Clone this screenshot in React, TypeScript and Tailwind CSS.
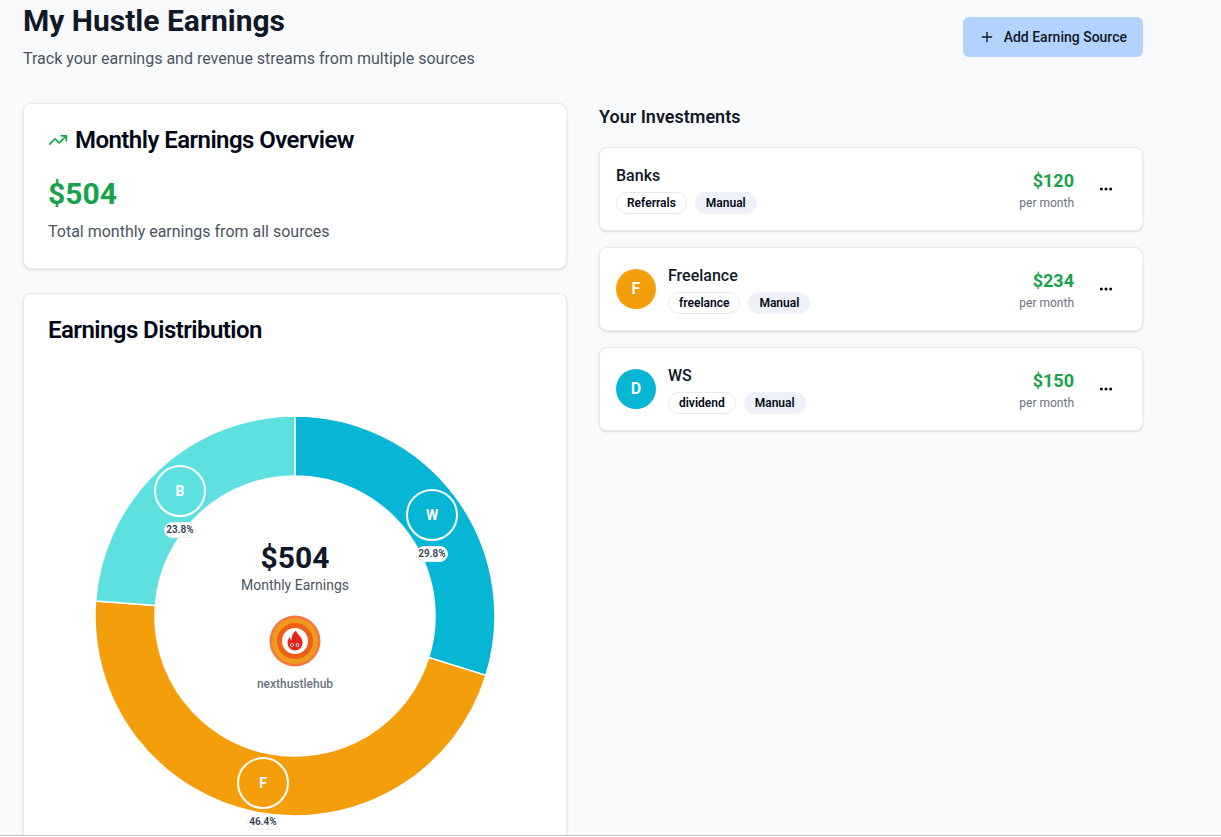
import { Plus, TrendingUp, MoreHorizontal } from "lucide-react";

const font = "font-['Roboto',sans-serif]";

const sources = [
  { name: "Banks", tag: "Referrals", amount: "$120" },
  { name: "Freelance", tag: "freelance", amount: "$234", letter: "F", color: "bg-[#f59e0b]" },
  { name: "WS", tag: "dividend", amount: "$150", letter: "D", color: "bg-[#06b6d4]" },
];

const markers = [
  { letter: "B", pct: "23.8%", pos: "left-[59px] top-[49px]" },
  { letter: "W", pct: "29.8%", pos: "left-[311px] top-[73px]" },
  { letter: "F", pct: "46.4%", pos: "left-[142px] top-[341px]" },
];

function polar(r: number, frac: number) {
  const a = frac * Math.PI * 2 - Math.PI / 2;
  return [200 + r * Math.cos(a), 200 + r * Math.sin(a)];
}

function slice(from: number, to: number) {
  const [x1, y1] = polar(200, from);
  const [x2, y2] = polar(200, to);
  const [x3, y3] = polar(140, to);
  const [x4, y4] = polar(140, from);
  const large = to - from > 0.5 ? 1 : 0;
  return `M${x1} ${y1}A200 200 0 ${large} 1 ${x2} ${y2}L${x3} ${y3}A140 140 0 ${large} 0 ${x4} ${y4}Z`;
}

function Logo() {
  return (
    <svg width="52" height="52" viewBox="0 0 52 52" aria-hidden="true">
      <circle cx="26" cy="26" r="25.5" fill="#f4793f" />
      <circle cx="26" cy="26" r="23" fill="#ee9a1c" />
      <circle cx="26" cy="26" r="18" fill="#ef5f1c" />
      <circle cx="26" cy="26" r="13" fill="#ffffff" />
      <path d="M27 15.500c.5 3.500 6.500 6 6.500 12.500a7.500 7.500 0 0 1-15 0c0-2.500 1-4.500 2.300-6 .2 1.500.7 2.500 1.700 3 .2-4 1.500-7.500 4.500-9.500z" fill="#e5231b" />
      <circle cx="23" cy="30" r="1.800" fill="#fff" />
      <circle cx="28.500" cy="30" r="1.800" fill="#fff" />
      <circle cx="23" cy="30" r="1" fill="#333" />
      <circle cx="28.500" cy="30" r="1" fill="#333" />
    </svg>
  );
}

function Donut() {
  return (
    <div className="relative mx-auto mt-[74px] h-[400px] w-[400px]">
      <svg width="400" height="400" viewBox="0 0 400 400" aria-hidden="true">
        <path d={slice(0, 0.298)} fill="#06b6d4" stroke="#ffffff" strokeWidth="1.500" />
        <path d={slice(0.298, 0.762)} fill="#f59e0b" stroke="#ffffff" strokeWidth="1.500" />
        <path d={slice(0.762, 1)} fill="#5ee0e0" stroke="#ffffff" strokeWidth="1.500" />
      </svg>
      <div className="absolute inset-x-0 top-[124px] flex flex-col items-center">
        <div className="text-[30px] leading-[35px] font-bold text-[#111827]">$504</div>
        <div className="text-sm leading-5 text-[#4b5563]">Monthly Earnings</div>
        <div className="mt-[20px] h-[52px]"><Logo /></div>
        <div className="mt-[9px] text-xs leading-4 font-medium text-[#6b7280]">nexthustlehub</div>
      </div>
      {markers.map((m) => (
        <div key={m.letter} className={`absolute flex w-[52px] flex-col items-center ${m.pos}`}>
          <div className="flex h-[52px] w-[52px] items-center justify-center rounded-full border-[2px] border-white text-sm font-bold text-white">
            {m.letter}
          </div>
          <div className="mt-[5px] rounded-full border border-[#f0f0f0] bg-white px-[1px] text-[10px] leading-[14px] font-semibold text-[#374151]">
            {m.pct}
          </div>
        </div>
      ))}
    </div>
  );
}

function SourceCard({ s }: { s: (typeof sources)[number] }) {
  return (
    <div className="flex h-[84px] items-center rounded-lg border border-[#e5e9f0] bg-white pr-[23px] pl-[16px] shadow-sm">
      {s.letter && (
        <div className={`mr-[12px] flex h-10 w-10 items-center justify-center rounded-full text-base font-semibold text-white ${s.color}`}>
          {s.letter}
        </div>
      )}
      <div className="flex-1">
        <div className="mt-[1px] text-base leading-[22px] font-medium text-[#111827]">{s.name}</div>
        <div className="mt-[5px] flex gap-2">
          <span className="flex h-[22px] items-center rounded-full border border-[#e5e9f0] px-[10px] text-xs font-semibold text-[#020817]">{s.tag}</span>
          <span className="flex h-[22px] items-center rounded-full bg-[#eef2f8] px-[11px] text-xs font-semibold text-[#020817]">Manual</span>
        </div>
      </div>
      <div className="text-right">
        <div className="text-lg leading-7 font-bold text-[#16a34a]">{s.amount}</div>
        <div className="text-xs leading-4 text-[#6b7280]">per month</div>
      </div>
      <MoreHorizontal size={16} strokeWidth={2.5} className="mr-[5px] ml-[24px] text-[#020817]" />
    </div>
  );
}

export default function App() {
  return (
    <div className={`h-[837px] w-[1221px] overflow-hidden bg-white ${font}`}>
      <div className="h-[836px] overflow-hidden border-b border-[#c8c8c8] bg-[#f9fafc]">
        <div className="ml-[23px] w-[1120px]">
          <div className="flex h-[103px] items-start justify-between">
            <div>
              <h1 className="mt-[3px] text-[30px] leading-9 font-bold text-[#111827]">My Hustle Earnings</h1>
              <p className="mt-[8px] text-base leading-6 text-[#4b5563]">Track your earnings and revenue streams from multiple sources</p>
            </div>
            <button className="mt-[17px] flex h-10 items-center gap-[9px] rounded-md bg-[#b3d3ff] px-4 text-sm font-medium text-[#111827]">
              <Plus size={16} />
              Add Earning Source
            </button>
          </div>
          <div className="grid grid-cols-2 gap-8">
            <div className="flex flex-col gap-6">
              <div className="h-[166px] rounded-lg border border-[#e5e9f0] bg-white p-6 shadow-sm">
                <div className="flex items-center gap-[7px]">
                  <TrendingUp size={20} className="text-[#16a34a]" />
                  <h2 className="text-2xl leading-6 font-semibold tracking-[-0.55px] text-[#020817]">Monthly Earnings Overview</h2>
                </div>
                <div className="mt-[24px] text-[30px] leading-9 font-bold text-[#16a34a]">$504</div>
                <p className="mt-[8px] text-base leading-6 text-[#4b5563]">Total monthly earnings from all sources</p>
              </div>
              <div className="h-[600px] rounded-lg border border-[#e5e9f0] bg-white pt-6 shadow-sm">
                <h2 className="ml-6 text-2xl leading-6 font-semibold tracking-[-0.55px] text-[#020817]">Earnings Distribution</h2>
                <Donut />
              </div>
            </div>
            <div>
              <h3 className="text-lg leading-7 font-semibold text-[#111827]">Your Investments</h3>
              <div className="mt-[16px] flex flex-col gap-4">
                {sources.map((s) => (
                  <SourceCard key={s.name} s={s} />
                ))}
              </div>
            </div>
          </div>
        </div>
      </div>
    </div>
  );
}
